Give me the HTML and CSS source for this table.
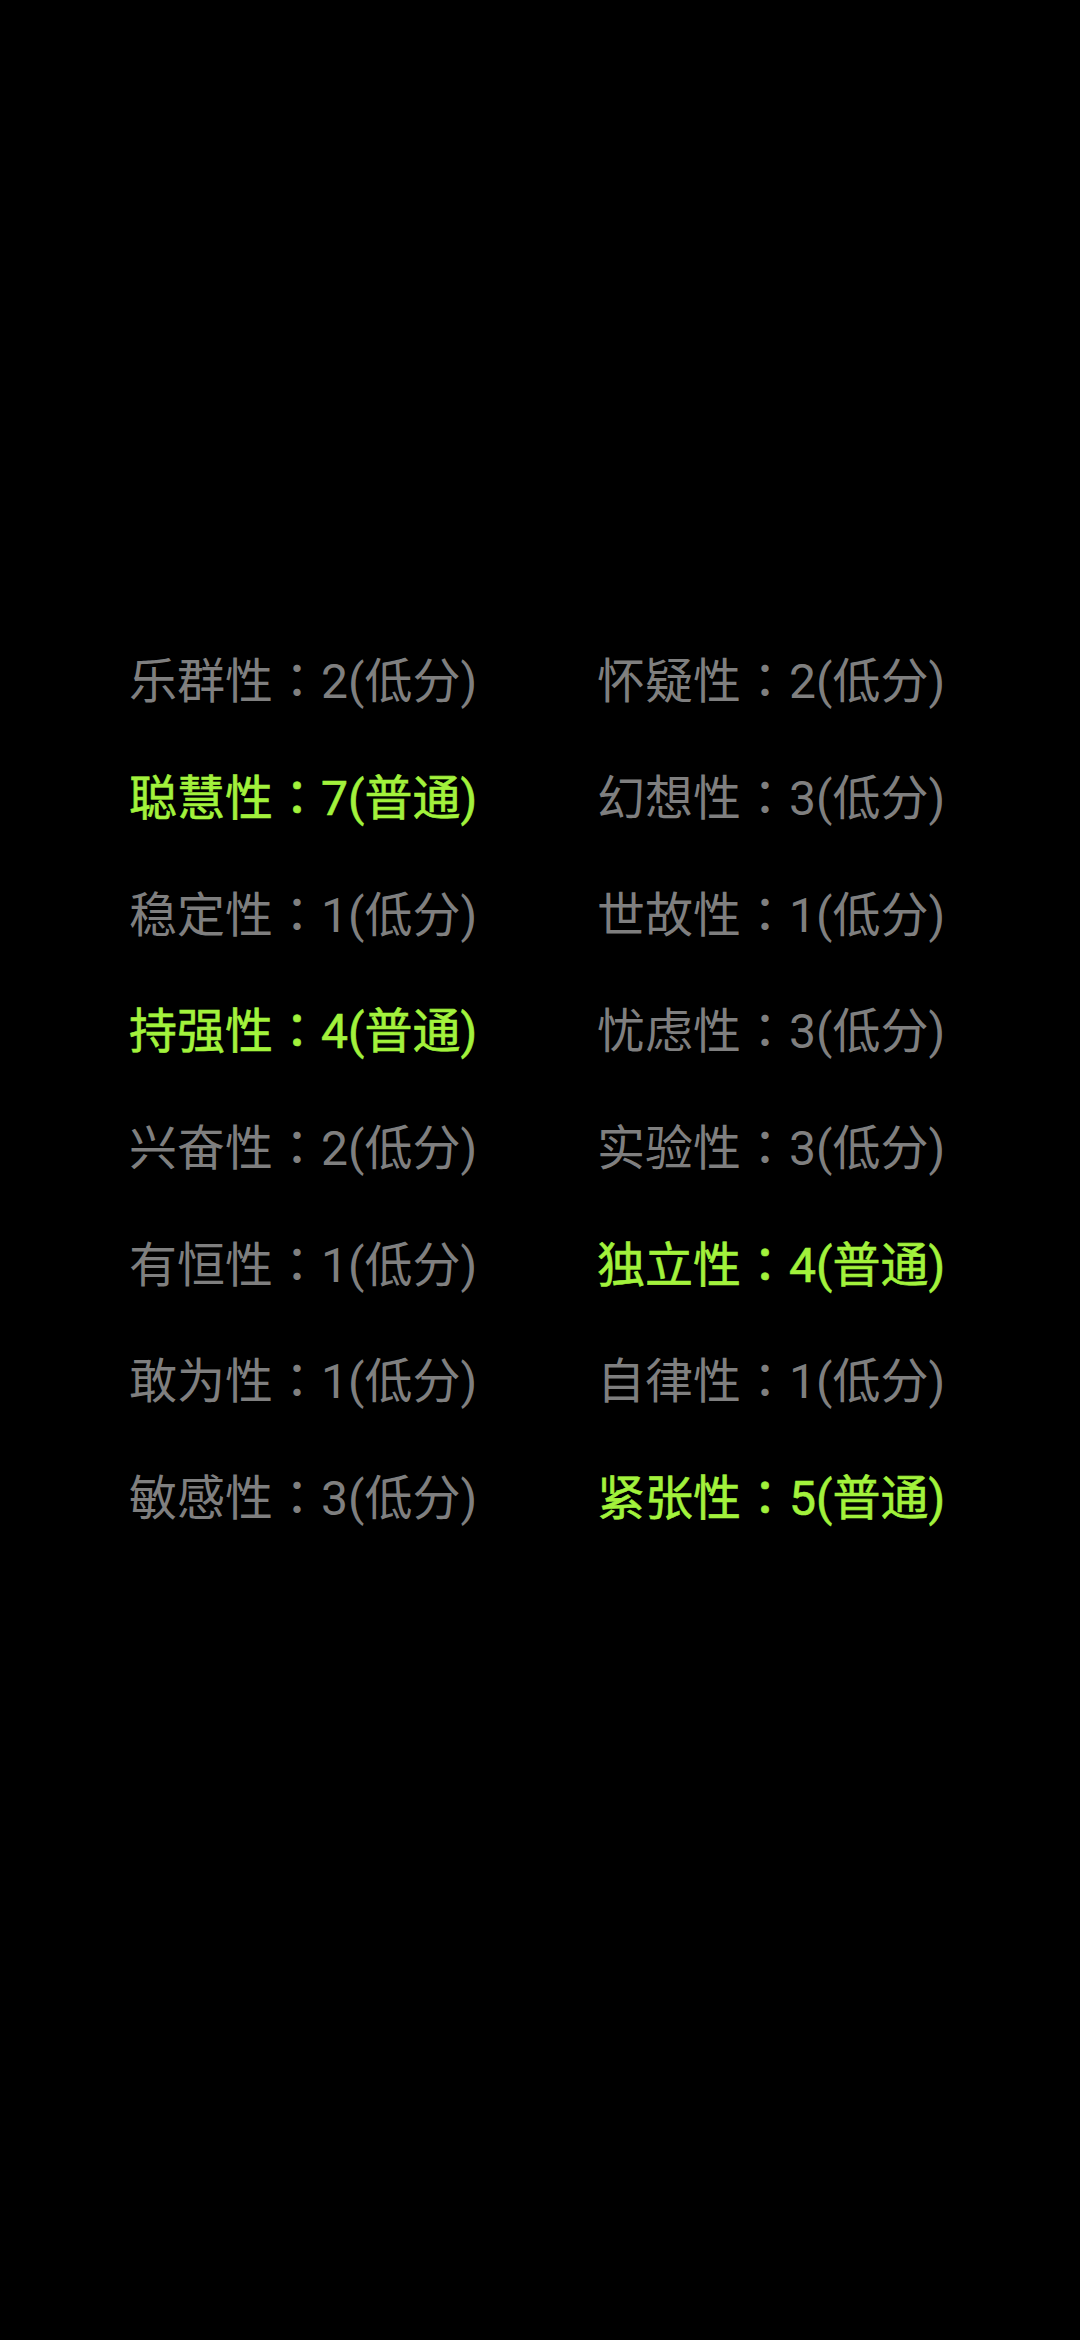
FILE: index.html
```html
<!DOCTYPE html>
<html lang="zh-CN">
<head>
  <meta charset="UTF-8" />
  <meta name="viewport" content="width=device-width, initial-scale=1.0"/>
  <title>16PF 结果</title>
  <link rel="stylesheet" href="styles.css">
</head>
<body>
  <div class="result">
    <div class="item">乐群性<span class="sep" lang="ja">：</span>2(低分)</div>
    <div class="item">怀疑性<span class="sep" lang="ja">：</span>2(低分)</div>
    <div class="item normal">聪慧性<span class="sep" lang="ja">：</span>7(普通)</div>
    <div class="item">幻想性<span class="sep" lang="ja">：</span>3(低分)</div>
    <div class="item">稳定性<span class="sep" lang="ja">：</span>1(低分)</div>
    <div class="item">世故性<span class="sep" lang="ja">：</span>1(低分)</div>
    <div class="item normal">持强性<span class="sep" lang="ja">：</span>4(普通)</div>
    <div class="item">忧虑性<span class="sep" lang="ja">：</span>3(低分)</div>
    <div class="item">兴奋性<span class="sep" lang="ja">：</span>2(低分)</div>
    <div class="item">实验性<span class="sep" lang="ja">：</span>3(低分)</div>
    <div class="item">有恒性<span class="sep" lang="ja">：</span>1(低分)</div>
    <div class="item normal">独立性<span class="sep" lang="ja">：</span>4(普通)</div>
    <div class="item">敢为性<span class="sep" lang="ja">：</span>1(低分)</div>
    <div class="item">自律性<span class="sep" lang="ja">：</span>1(低分)</div>
    <div class="item">敏感性<span class="sep" lang="ja">：</span>3(低分)</div>
    <div class="item normal">紧张性<span class="sep" lang="ja">：</span>5(普通)</div>
  </div>
</body>
</html>
```

FILE: styles.css
```css
html, body {
  margin: 0;
  background-color: #000;
}

body {
  height: 2340px;
  font-family: Roboto, "Noto Sans CJK SC", sans-serif;
}

.result {
  display: grid;
  grid-template-columns: 468px 468px;
  grid-auto-rows: 116.7px;
  padding: 619px 0 0 129px;
}

.item {
  display: flex;
  align-items: center;
  font-size: 48px;
  color: #7f7f7f;
  white-space: nowrap;
}

.sep {
  font-family: "Noto Sans CJK JP", sans-serif;
}

.normal {
  color: #a2f23c;
  -webkit-text-stroke: 0.6px #a2f23c;
}
```
